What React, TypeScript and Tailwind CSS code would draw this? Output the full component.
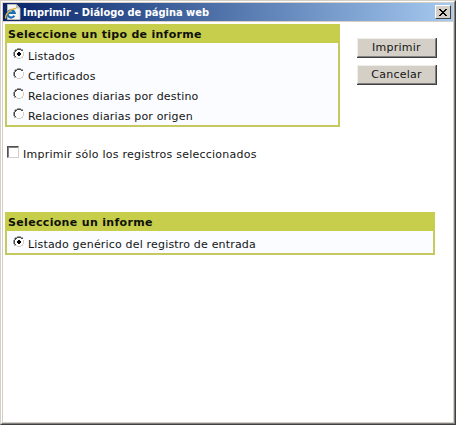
import type { ReactNode } from 'react';

function PageIcon() {
  return (
    <svg width="16" height="16" viewBox="0 0 16 16" className="shrink-0">
      <path d="M2.500 .5h9L15 4v11.500H2.500z" fill="#f4f4f0" stroke="#c9c5b8" strokeWidth=".8" />
      <path d="M11.500.5 15 4h-3.500z" fill="#c9c9c0" stroke="#96968e" strokeWidth=".5" />
      <path d="M9.300 11.800A3.600 3.600 0 1 1 9.700 9H3.200" fill="none" stroke="#1b70b8" strokeWidth="2.200" />
      <path d="M1 14.500C-.8 11 6 4 11 4.600" fill="none" stroke="#e5b53a" strokeWidth="1.400" />
    </svg>
  );
}

function Radio({ checked = false }: { checked?: boolean }) {
  return (
    <svg width="12" height="12" viewBox="0 0 12 12" shapeRendering="crispEdges" className="shrink-0">
      <path d="M4 1h4v1h2v2h1v4h-1v2H8v1H4v-1H2V8H1V4h1V2h2z" fill="#fff" />
      <path d="M4 0h4v1H4zM2 1h2v1H2zM8 1h2v1H8zM1 2h1v2H1zM0 4h1v4H0zM1 8h1v2H1z" fill="#a0a0a0" />
      <path d="M4 1h4v1H4zM2 2h2v1H2zM8 2h2v1H8zM2 3h1v1H2zM1 4h1v4H1zM2 8h1v1H2z" fill="#484848" />
      <path d="M10 4h1v4h-1zM9 8h1v1H9zM8 9h2v1H8zM2 9h2v1H2zM4 10h4v1H4z" fill="#d4d0c8" />
      {checked && <path d="M5 4h2v1h1v2H7v1H5V7H4V5h1z" fill="#000" />}
    </svg>
  );
}

function Option({ checked, children }: { checked?: boolean; children: ReactNode }) {
  return (
    <div className="flex h-5 items-start pl-[6px]">
      <Radio checked={checked} />
      <span className="mt-[2px] ml-[3px] h-[14px] leading-[14px] tracking-[0.18px] whitespace-nowrap">
        {children}
      </span>
    </div>
  );
}

function Button({ children }: { children: ReactNode }) {
  return (
    <button className="flex h-5 w-20 border-r border-b border-[#404040]">
      <span className="flex h-full w-full items-center justify-center border-t border-r border-b border-l border-t-[#f0eee9] border-r-[#808080] border-b-[#808080] border-l-[#f0eee9] bg-[#d4d0c8] pt-px text-[11px] tracking-[0.25px]">
        {children}
      </span>
    </button>
  );
}

export default function App() {
  return (
    <div className="h-[425px] w-[456px] border-t border-r border-b border-l border-t-[#d4d0c8] border-r-[#404040] border-b-[#404040] border-l-[#d4d0c8] font-['DejaVu_Sans',Verdana,sans-serif] text-[11px] text-[#151515]">
      <div className="h-full border border-t-white border-r-[#808080] border-b-[#808080] border-l-white">
        <div className="h-full border border-[#d4d0c8] bg-white">
          <div className="flex h-[18px] items-center bg-linear-to-r from-[#0a246a] to-[#a6caf0] pr-[2px] pl-[2px]">
            <PageIcon />
            <span className="ml-[2px] h-[18px] flex-1 pt-px font-['DejaVu_Sans_Condensed','DejaVu_Sans',Tahoma,sans-serif] text-[11px] leading-[18px] font-bold tracking-[-0.01px] whitespace-nowrap text-white">
              Imprimir - Diálogo de página web
            </span>
            <button className="flex h-[14px] w-4 items-center justify-center border border-t-white border-r-[#404040] border-b-[#404040] border-l-white bg-[#d4d0c8]">
              <svg width="8" height="7" viewBox="0 0 8 7" shapeRendering="crispEdges">
                <path d="M0 0h2v1h1v1h2V1h1V0h2v1H7v1H6v1H5v1h1v1h1v1h1v1H6V6H5V5H3v1H2v1H0V6h1V5h1V4h1V3H2V2H1V1H0z" fill="#000" />
              </svg>
            </button>
          </div>
          <div className="h-px bg-[#d4d0c8]" />
          <div className="flex items-start pt-[2px] pl-[2px]">
            <section className="h-[103px] w-[335px] border-2 border-[#c6c860] bg-[#fafcff]">
              <h2 className="-mx-[2px] -mt-[2px] h-[19px] bg-[#c6ce4c] pt-px pl-[3px] leading-[20px] font-bold tracking-[0.29px] whitespace-nowrap text-[#101008]">
                Seleccione un tipo de informe
              </h2>
              <div className="pt-[5px]">
                <Option checked>Listados</Option>
                <Option>Certificados</Option>
                <Option>Relaciones diarias por destino</Option>
                <Option>Relaciones diarias por origen</Option>
              </div>
            </section>
            <div className="mt-[14px] ml-[17px] flex flex-col gap-[7px]">
              <Button>Imprimir</Button>
              <Button>Cancelar</Button>
            </div>
          </div>
          <label className="mt-[19px] ml-1 flex h-[14px] items-start">
            <span className="h-3 w-3 shrink-0 border border-t-[#505050] border-r-[#d4d0c8] border-b-[#d4d0c8] border-l-[#505050] bg-white shadow-[inset_1px_1px_0_#808080]" />
            <span className="mt-[2px] ml-1 h-[14px] leading-[14px] tracking-[0.24px] whitespace-nowrap">
              Imprimir sólo los registros seleccionados
            </span>
          </label>
          <section className="mt-[52px] ml-[2px] h-[43px] w-[430px] border-2 border-[#c6c860] bg-[#fafcff]">
            <h2 className="-mx-[2px] -mt-[2px] h-[19px] bg-[#c6ce4c] pt-px pl-[3px] leading-[20px] font-bold tracking-[0.33px] whitespace-nowrap text-[#101008]">
              Seleccione un informe
            </h2>
            <div className="pt-[5px]">
              <Option checked>Listado genérico del registro de entrada</Option>
            </div>
          </section>
        </div>
      </div>
    </div>
  );
}
